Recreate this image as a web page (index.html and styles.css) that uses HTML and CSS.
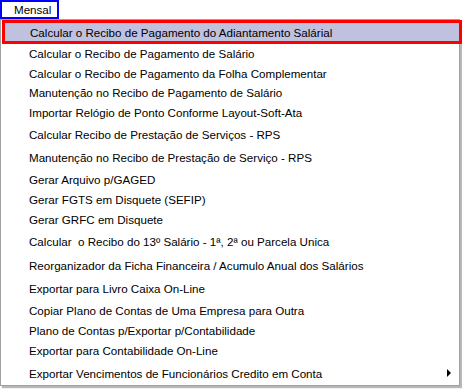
FILE: index.html
```html
<!DOCTYPE html>
<html>
<head>
<meta charset="utf-8">
<link rel="stylesheet" href="styles.css">
</head>
<body>
<div class="tab">Mensal</div>
<div class="menu">
  <div class="item active h24">Calcular o Recibo de Pagamento do Adiantamento Salárial</div>
  <div class="item h19">Calcular o Recibo de Pagamento de Salário</div>
  <div class="item h20">Calcular o Recibo de Pagamento da Folha Complementar</div>
  <div class="item h19">Manutenção no Recibo de Pagamento de Salário</div>
  <div class="item h21">Importar Relógio de Ponto Conforme Layout-Soft-Ata</div>
  <div class="item h23">Calcular Recibo de Prestação de Serviços - RPS</div>
  <div class="item h22">Manutenção no Recibo de Prestação de Serviço - RPS</div>
  <div class="item h22">Gerar Arquivo p/GAGED</div>
  <div class="item h19">Gerar FGTS em Disquete (SEFIP)</div>
  <div class="item h20">Gerar GRFC em Disquete</div>
  <div class="item h24">Calcular&nbsp; o Recibo do 13º Salário - 1ª, 2ª ou Parcela Unica</div>
  <div class="item h24">Reorganizador da Ficha Financeira / Acumulo Anual dos Salários</div>
  <div class="item h23">Exportar para Livro Caixa On-Line</div>
  <div class="item h21">Copiar Plano de Contas de Uma Empresa para Outra</div>
  <div class="item h19">Plano de Contas p/Exportar p/Contabilidade</div>
  <div class="item h21">Exportar para Contabilidade On-Line</div>
  <div class="item h24 sub">Exportar Vencimentos de Funcionários Credito em Conta<span class="arrow"></span></div>
</div>
</body>
</html>
```

FILE: styles.css
```css
html, body {
  margin: 0;
  padding: 0;
  background: #ffffff;
}
body {
  font-family: "Liberation Sans", Arial, sans-serif;
  font-size: 11.6px;
  color: #000000;
  width: 462px;
  height: 390px;
  overflow: hidden;
}
.tab {
  box-sizing: border-box;
  width: 59px;
  height: 19px;
  border: 2px solid #0000ff;
  padding-left: 12px;
  line-height: 15px;
  background: #ffffff;
}
.menu {
  box-sizing: border-box;
  width: 460px;
  border: 1px solid #a0a0a0;
  background: #ffffff;
  box-shadow: 2px 2px 1px rgba(0, 0, 0, 0.28);
  display: flex;
  flex-direction: column;
}
.item {
  display: flex;
  align-items: center;
  padding-left: 28px;
  white-space: nowrap;
  position: relative;
}
.h19 { height: 19px; }
.h20 { height: 20px; }
.h21 { height: 21px; }
.h22 { height: 22px; }
.h23 { height: 23px; }
.h24 { height: 24px; }
.item.active {
  box-sizing: border-box;
  margin-left: 1px;
  margin-right: -3px;
  padding-left: 25px;
  border: 3px solid #ff0000;
  background: #bfc1de;
}
.arrow {
  position: absolute;
  left: 446px;
  top: 50%;
  margin-top: -4px;
  width: 0;
  height: 0;
  border-top: 4px solid transparent;
  border-bottom: 4px solid transparent;
  border-left: 4px solid #000000;
}
```
